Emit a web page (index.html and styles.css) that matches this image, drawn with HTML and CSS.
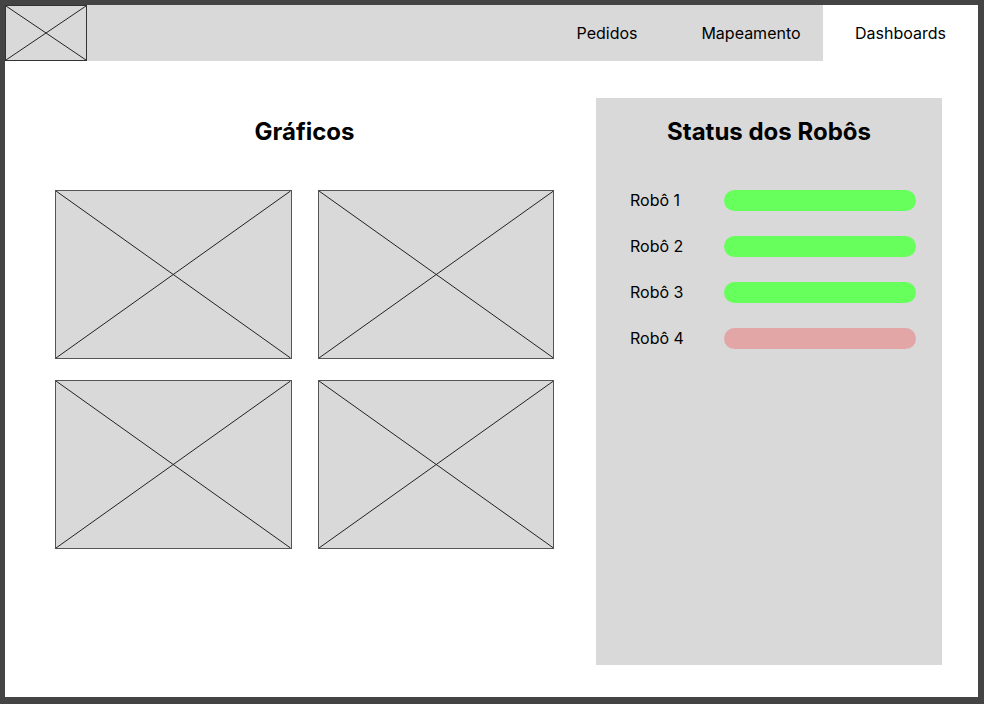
FILE: index.html
```html
<!DOCTYPE html>
<html lang="pt-BR">
<head>
  <meta charset="utf-8">
  <meta name="viewport" content="width=device-width, initial-scale=1">
  <title>Dashboards</title>
  <link rel="stylesheet" href="styles.css">
</head>
<body>
  <div class="page">
    <header class="topbar">
      <a class="logo" href="#" aria-label="Início">
        <svg class="cross" aria-hidden="true"><line x1="0" y1="0" x2="100%" y2="100%"/><line x1="100%" y1="0" x2="0" y2="100%"/></svg>
      </a>
      <nav class="tabs">
        <a class="tab" href="#">Pedidos</a>
        <a class="tab" href="#">Mapeamento</a>
        <a class="tab tab-active" href="#" aria-current="page">Dashboards</a>
      </nav>
    </header>
    <main class="content">
      <section class="charts">
        <h2 class="title">Gráficos</h2>
        <div class="chart-grid">
          <div class="chart"><svg class="cross" aria-hidden="true"><line x1="0" y1="0" x2="100%" y2="100%"/><line x1="100%" y1="0" x2="0" y2="100%"/></svg></div>
          <div class="chart"><svg class="cross" aria-hidden="true"><line x1="0" y1="0" x2="100%" y2="100%"/><line x1="100%" y1="0" x2="0" y2="100%"/></svg></div>
          <div class="chart"><svg class="cross" aria-hidden="true"><line x1="0" y1="0" x2="100%" y2="100%"/><line x1="100%" y1="0" x2="0" y2="100%"/></svg></div>
          <div class="chart"><svg class="cross" aria-hidden="true"><line x1="0" y1="0" x2="100%" y2="100%"/><line x1="100%" y1="0" x2="0" y2="100%"/></svg></div>
        </div>
      </section>
      <section class="status">
        <h2 class="title">Status dos Robôs</h2>
        <ul class="robots">
          <li class="robot"><span class="name">Robô 1</span><span class="bar"></span></li>
          <li class="robot"><span class="name">Robô 2</span><span class="bar"></span></li>
          <li class="robot"><span class="name">Robô 3</span><span class="bar"></span></li>
          <li class="robot"><span class="name">Robô 4</span><span class="bar bar-off"></span></li>
        </ul>
      </section>
    </main>
  </div>
</body>
</html>
```
FILE: styles.css
```css
* {
  box-sizing: border-box;
}

body {
  display: flex;
  min-height: 100vh;
  margin: 0;
  padding: 5px 6px 7px 5px;
  background: #444;
  color: #000;
  font: 16px/24px Inter, "Liberation Sans", sans-serif;
}

.page {
  display: flex;
  flex: 1;
  flex-direction: column;
  background: #fff;
}

.topbar {
  display: flex;
  justify-content: space-between;
  height: 56px;
  background: #d9d9d9;
}

.logo {
  width: 82px;
  border: 1px solid #333;
}

.cross {
  display: block;
  width: 100%;
  height: 100%;
  stroke: #222;
  stroke-width: 1;
}

.tabs {
  display: flex;
}

.tab {
  display: flex;
  align-items: center;
  justify-content: center;
  width: 144px;
  color: inherit;
  text-decoration: none;
}

.tab-active {
  width: 155px;
  background: #fff;
}

.content {
  display: grid;
  flex: 1;
  grid-template-columns: 499fr 346fr;
  gap: 42px;
  padding: 37px 36px 32px 50px;
}

.title {
  margin: 0;
  font-size: 24px;
  font-weight: 700;
  line-height: 32px;
  text-align: center;
}

.charts {
  padding-top: 18px;
}

.chart-grid {
  display: grid;
  grid-template-columns: 1fr 1fr;
  gap: 21px 26px;
  margin-top: 42px;
}

.chart {
  height: 169px;
  border: 1px solid #555;
  background: #d9d9d9;
}

.status {
  padding: 18px 26px 18px 34px;
  background: #d9d9d9;
}

.status .title {
  margin-right: -26px;
  margin-left: -34px;
}

.robots {
  display: grid;
  gap: 22px;
  margin: 40px 0 0;
  padding: 0;
  list-style: none;
}

.robot {
  display: flex;
  align-items: center;
}

.name {
  width: 94px;
}

.bar {
  flex: 1;
  height: 21px;
  border-radius: 11px;
  background: #66ff5b;
}

.bar-off {
  background: #e3a6a6;
}
```
